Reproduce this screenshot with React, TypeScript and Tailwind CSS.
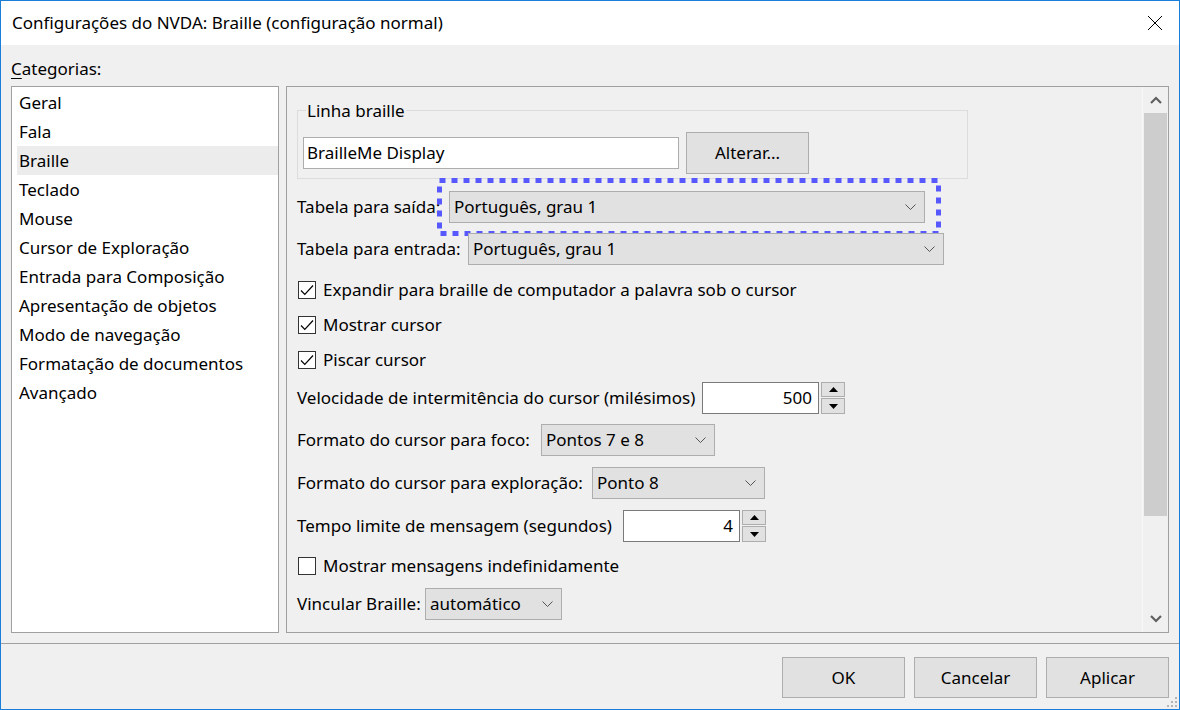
import type { ReactNode } from 'react'

const categories = [
  'Geral',
  'Fala',
  'Braille',
  'Teclado',
  'Mouse',
  'Cursor de Exploração',
  'Entrada para Composição',
  'Apresentação de objetos',
  'Modo de navegação',
  'Formatação de documentos',
  'Avançado',
]

function Chevron() {
  return (
    <svg width="11" height="6" viewBox="0 0 11 6" className="shrink-0">
      <path d="M0.5 0.5 L5.5 5.5 L10.5 0.5" fill="none" stroke="#555" strokeWidth="1" />
    </svg>
  )
}

/** Windows-style combo box: grey face, light border, small chevron on the right. */
function Combo({ value, width, children }: { value: string; width: string; children?: ReactNode }) {
  return (
    <div className={`relative flex h-[32px] shrink-0 items-center justify-between border border-[#adadad] bg-[#e1e1e1] pl-[4px] pr-[8px] ${width}`}>
      <span className="whitespace-nowrap">{value}</span>
      <Chevron />
      {children}
    </div>
  )
}

function Spin({ value }: { value: string }) {
  return (
    <div className="flex h-[32px] items-center gap-[2px]">
      <div className="flex h-[32px] w-[117px] items-center justify-end border border-[#7a7a7a] bg-white pr-[6px]">
        {value}
      </div>
      <div className="flex h-[32px] flex-col gap-[1px]">
        <div className="flex h-[15px] w-[24px] items-center justify-center border border-[#adadad] bg-[#e1e1e1]">
          <svg width="9" height="5" viewBox="0 0 9 5">
            <path d="M0 5 L4.5 0 L9 5 Z" fill="#000" />
          </svg>
        </div>
        <div className="flex h-[16px] w-[24px] items-center justify-center border border-[#adadad] bg-[#e1e1e1]">
          <svg width="9" height="5" viewBox="0 0 9 5">
            <path d="M0 0 L4.5 5 L9 0 Z" fill="#000" />
          </svg>
        </div>
      </div>
    </div>
  )
}

function Check({ label, checked }: { label: string; checked: boolean }) {
  return (
    <div className="flex h-[20px] items-center gap-[7px] pl-[1px]">
      <div className="flex h-[18px] w-[18px] shrink-0 items-center justify-center border border-[#333] bg-white">
        {checked ? (
          <svg width="14" height="12" viewBox="0 0 14 12">
            <path d="M1 6.5 L4.8 10.3 L13 1.5" fill="none" stroke="#000" strokeWidth="1.2" />
          </svg>
        ) : null}
      </div>
      <span className="whitespace-nowrap">{label}</span>
    </div>
  )
}

function Btn({ label }: { label: string }) {
  return (
    <div className="flex h-[41px] w-[123px] items-center justify-center border border-[#adadad] bg-[#e1e1e1]">
      {label}
    </div>
  )
}

function ScrollArrow({ up }: { up: boolean }) {
  return (
    <div className="flex h-[26px] items-center justify-center">
      <svg width="12" height="8" viewBox="0 0 12 8">
        <path
          d={up ? 'M1 7 L6 2 L11 7' : 'M1 1 L6 6 L11 1'}
          fill="none"
          stroke="#606060"
          strokeWidth="2.2"
        />
      </svg>
    </div>
  )
}

export default function App() {
  return (
    <div className="relative flex h-[710px] w-[1180px] flex-col border border-[#1a7dd7] bg-[#f0f0f0] font-['Noto_Sans',sans-serif] text-[17px] leading-[20px] text-black">
      {/* title bar */}
      <div className="flex h-[44px] shrink-0 items-center justify-between bg-white pl-[11px]">
        <span>Configurações do NVDA: Braille (configuração normal)</span>
        <svg width="16" height="16" viewBox="0 0 16 16" className="mr-[16px]">
          <path d="M1 1 L15 15 M15 1 L1 15" stroke="#000" strokeWidth="1" />
        </svg>
      </div>

      <div className="flex flex-1 flex-col px-[10px] pt-[14px]">
        <div className="h-[20px]">
          <span className="underline underline-offset-[3px] decoration-1">C</span>ategorias:
        </div>

        <div className="mt-[7px] flex h-[547px] gap-[7px]">
          {/* category list */}
          <div className="w-[268px] shrink-0 border border-[#a0a0a0] bg-white pt-[1px]">
            {categories.map((c) => (
              <div
                key={c}
                className={`ml-[5px] flex h-[29px] items-center pl-[2px] ${c === 'Braille' ? 'bg-[#ececec]' : ''}`}
              >
                {c}
              </div>
            ))}
          </div>

          {/* settings panel */}
          <div className="flex w-[883px] shrink-0 border border-[#a0a0a0] bg-[#f0f0f0]">
            <div className="flex flex-1 flex-col pl-[10px] pt-[23px]">
              <div className="relative flex h-[69px] w-[671px] items-center gap-[7px] border border-[#dcdcdc] pb-[4px] pl-[5px] pt-[21px]">
                <span className="absolute left-[8px] top-[-10px] bg-[#f0f0f0] px-[1px]">Linha braille</span>
                <div className="flex h-[32px] w-[376px] items-center border border-[#adadad] bg-white pl-[3px]">
                  BrailleMe Display
                </div>
                <div className="flex h-[42px] w-[123px] items-center justify-center border border-[#adadad] bg-[#e1e1e1]">
                  Alterar...
                </div>
              </div>

              <div className="mt-[12px] flex items-center">
                <span className="w-[152px] shrink-0 whitespace-nowrap">Tabela para saída:</span>
                <Combo value="Português, grau 1" width="w-[476px]">
                  <svg
                    width="504"
                    height="58"
                    viewBox="0 0 504 58"
                    className="pointer-events-none absolute left-[-13px] top-[-14px]"
                  >
                    <rect
                      x="2.5"
                      y="2.5"
                      width="499"
                      height="53"
                      fill="none"
                      stroke="#5858ff"
                      strokeWidth="5"
                      strokeDasharray="6 6"
                    />
                  </svg>
                </Combo>
              </div>

              <div className="mt-[10px] flex items-center">
                <span className="w-[171px] shrink-0 whitespace-nowrap">Tabela para entrada:</span>
                <Combo value="Português, grau 1" width="w-[476px]" />
              </div>

              <div className="mt-[15px]">
                <Check checked label="Expandir para braille de computador a palavra sob o cursor" />
              </div>
              <div className="mt-[15px]">
                <Check checked label="Mostrar cursor" />
              </div>
              <div className="mt-[15px]">
                <Check checked label="Piscar cursor" />
              </div>

              <div className="mt-[12px] flex items-center">
                <span className="w-[405px] shrink-0 whitespace-nowrap">
                  Velocidade de intermitência do cursor (milésimos)
                </span>
                <Spin value="500" />
              </div>

              <div className="mt-[10px] flex items-center">
                <span className="w-[244px] shrink-0 whitespace-nowrap">Formato do cursor para foco:</span>
                <Combo value="Pontos 7 e 8" width="w-[174px]" />
              </div>

              <div className="mt-[11px] flex items-center">
                <span className="w-[295px] shrink-0 whitespace-nowrap">Formato do cursor para exploração:</span>
                <Combo value="Ponto 8" width="w-[173px]" />
              </div>

              <div className="mt-[11px] flex items-center">
                <span className="w-[326px] shrink-0 whitespace-nowrap">Tempo limite de mensagem (segundos)</span>
                <Spin value="4" />
              </div>

              <div className="mt-[14px]">
                <Check checked={false} label="Mostrar mensagens indefinidamente" />
              </div>

              <div className="mt-[12px] flex items-center">
                <span className="w-[128px] shrink-0 whitespace-nowrap">Vincular Braille:</span>
                <Combo value="automático" width="w-[137px]" />
              </div>
            </div>

            {/* scrollbar */}
            <div className="flex w-[26px] shrink-0 flex-col border-l border-[#f8f8f8] bg-[#f0f0f0]">
              <ScrollArrow up />
              <div className="mx-[1px] h-[403px] bg-[#cdcdcd]" />
              <div className="flex-1" />
              <ScrollArrow up={false} />
            </div>
          </div>
        </div>
      </div>

      {/* footer */}
      <div className="mt-[10px] h-[1px] shrink-0 bg-[#a0a0a0]" />
      <div className="flex shrink-0 justify-end gap-[9px] pb-[11px] pr-[10px] pt-[13px]">
        <Btn label="OK" />
        <Btn label="Cancelar" />
        <Btn label="Aplicar" />
      </div>

      <svg width="13" height="13" viewBox="0 0 13 13" className="absolute bottom-[1px] right-[1px]">
        <g fill="#b4b4b4">
          <rect x="10" y="2" width="2" height="2" />
          <rect x="6" y="6" width="2" height="2" />
          <rect x="10" y="6" width="2" height="2" />
          <rect x="2" y="10" width="2" height="2" />
          <rect x="6" y="10" width="2" height="2" />
          <rect x="10" y="10" width="2" height="2" />
        </g>
      </svg>
    </div>
  )
}
